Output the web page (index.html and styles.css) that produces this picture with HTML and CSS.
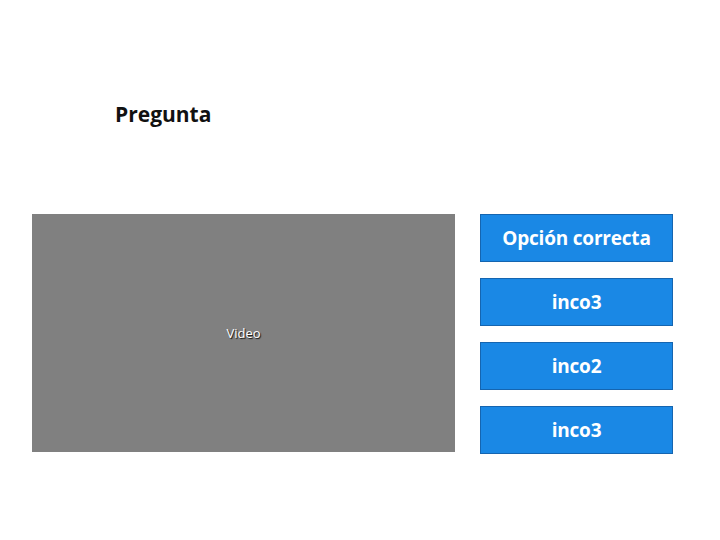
FILE: index.html
```html
<!DOCTYPE html>
<html>
<head>
<meta charset="utf-8">
<link rel="stylesheet" href="styles.css">
</head>
<body>
<div class="page">
  <h1 class="question">Pregunta</h1>
  <div class="row">
    <div class="video"><span class="video-label">Video</span></div>
    <div class="options">
      <div class="option">Opción correcta</div>
      <div class="option">inco3</div>
      <div class="option">inco2</div>
      <div class="option">inco3</div>
    </div>
  </div>
</div>
</body>
</html>
```
FILE: styles.css
```css
html, body {
  margin: 0;
  padding: 0;
  background: #ffffff;
}
.page {
  width: 720px;
  height: 540px;
  font-family: "Open Sans", sans-serif;
}
.question {
  margin: 0;
  padding: 100px 0 0 115px;
  height: 214px;
  box-sizing: border-box;
  font-size: 21px;
  font-weight: 700;
  line-height: 28px;
  color: #111;
}
.row {
  display: flex;
  padding-left: 32px;
  gap: 25px;
}
.video {
  width: 423px;
  height: 238px;
  background: #808080;
  display: flex;
  align-items: center;
  justify-content: center;
}
.video-label {
  font-size: 13px;
  color: #ffffff;
  text-shadow: 1px 1px 1px #111;
}
.options {
  display: flex;
  flex-direction: column;
  gap: 16px;
}
.option {
  width: 193px;
  height: 48px;
  box-sizing: border-box;
  background: #1a88e5;
  border: 1px solid #1565b0;
  color: #fff;
  font-size: 19px;
  font-weight: 700;
  letter-spacing: -0.2px;
  display: flex;
  align-items: center;
  justify-content: center;
}
```
